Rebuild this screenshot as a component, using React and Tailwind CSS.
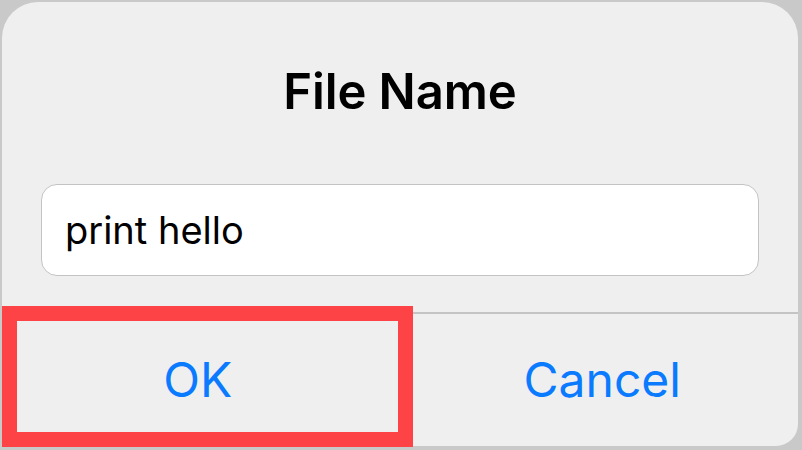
import React from 'react';

export default function App() {
	return (
		<div className="relative w-[802px] h-[450px] bg-[#c9c9c9] pt-[2px] pl-[2px] pr-[4px] pb-[4px] font-['Inter',sans-serif]">
			<div className="flex flex-col h-full bg-[#efefef] rounded-t-[36px] rounded-b-[22px] overflow-hidden">
				<div className="flex flex-col px-[39px] pt-[62px] pb-[36px] border-b-[2px] border-[#c4c4c4]">
					<h1 className="text-center text-[49px] leading-[56px] font-semibold text-black tracking-[-0.1px]">File Name</h1>
					<div className="mt-[64px] h-[92px] flex items-center px-[23px] bg-white border border-[#c3c3c3] rounded-[16px]">
						<span className="text-[38px] text-black">print hello</span>
					</div>
				</div>
				<div className="flex flex-1">
					<button className="flex-1 flex items-center justify-center pr-[4px] text-[48px] text-[#0a7aff] border-r border-[#c4c4c4]">OK</button>
					<button className="flex-1 flex items-center justify-center pl-[8px] text-[48px] text-[#0a7aff]">Cancel</button>
				</div>
			</div>
			<div className="absolute left-[2px] top-[306px] w-[411px] h-[141px] border-[15px] border-[#fd4346]"></div>
		</div>
	);
}
